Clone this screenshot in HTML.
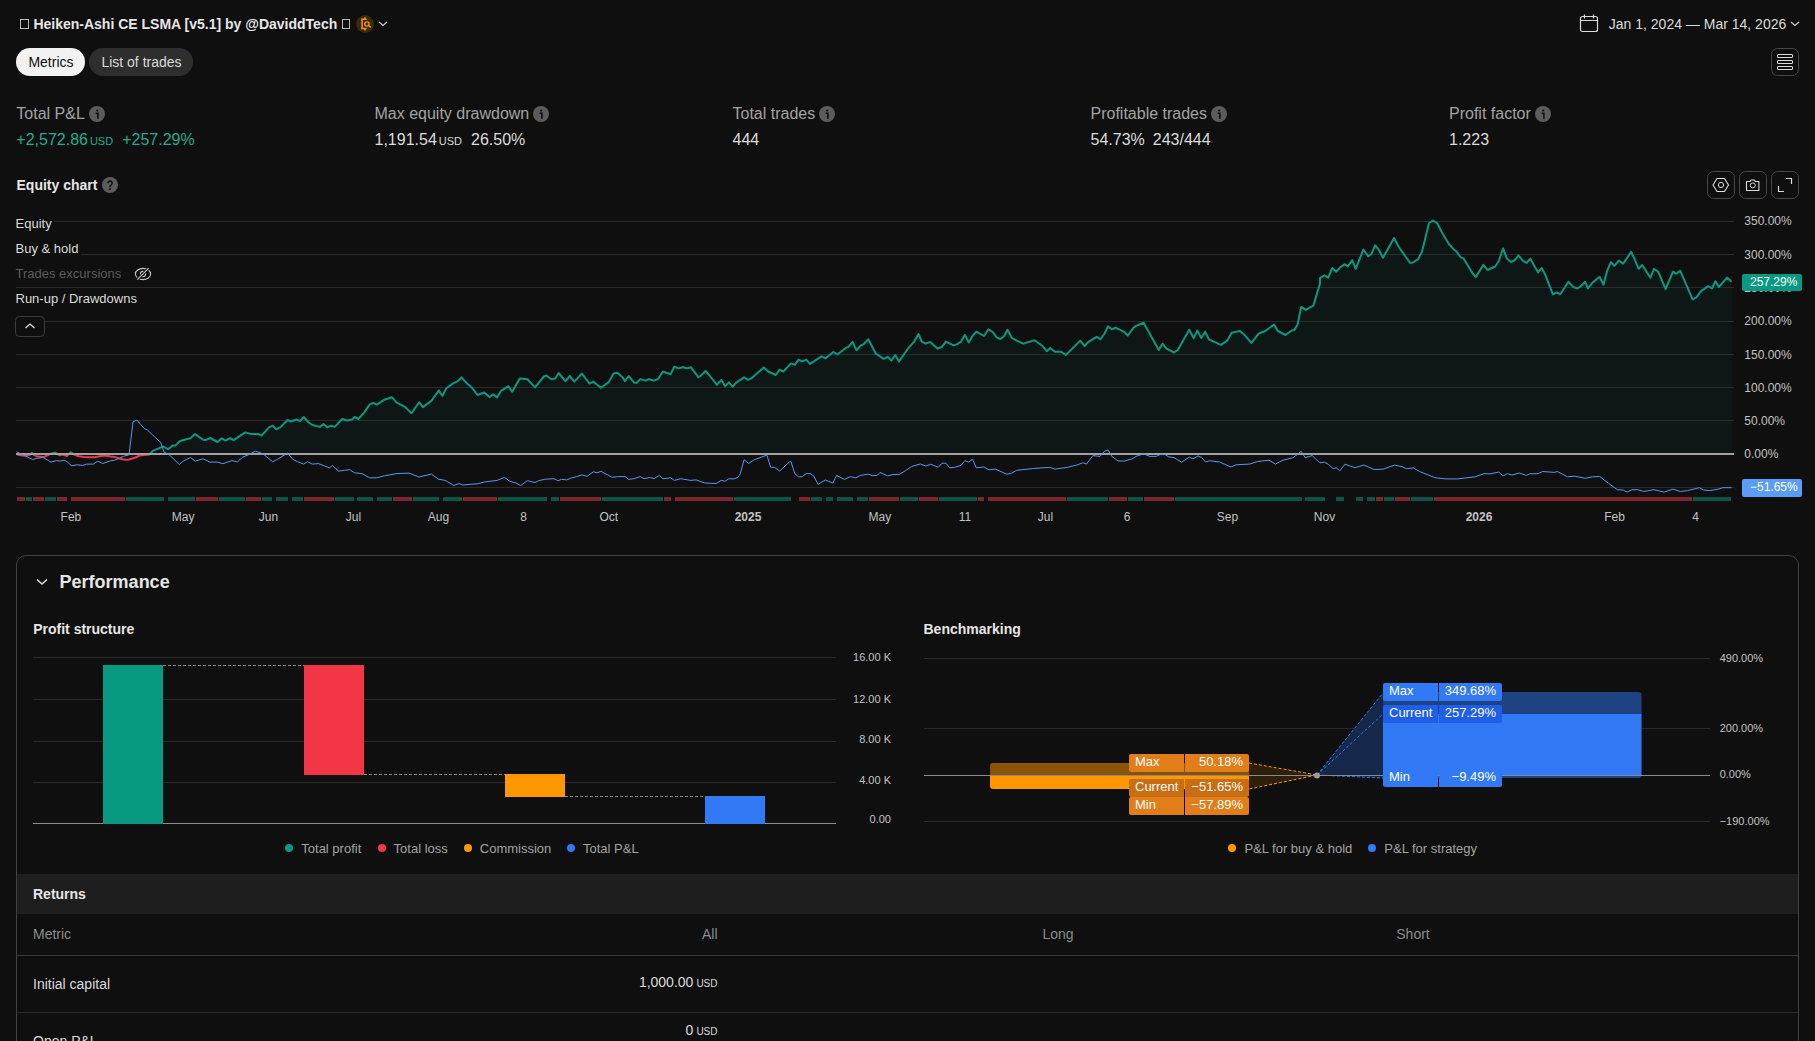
<!DOCTYPE html>
<html><head><meta charset="utf-8"><style>
html,body{margin:0;padding:0;background:#0f0f0f;}
body{width:1815px;height:1041px;overflow:hidden;position:relative;font-family:"Liberation Sans", sans-serif;}
.t{position:absolute;white-space:nowrap;}
.r{position:absolute;}
</style></head><body>
<div class="r" style="left:20px;top:19px;width:9px;height:10px;background:transparent;border:1px solid #b8b8b8;box-sizing:border-box;"></div>
<div class="t" style="left:33.4px;top:17.35px;font-size:14px;line-height:14px;color:#e6e6e6;font-weight:700;">Heiken-Ashi CE LSMA [v5.1] by @DaviddTech</div>
<div class="r" style="left:342px;top:19px;width:8px;height:10px;background:transparent;border:1px solid #b8b8b8;box-sizing:border-box;"></div>
<svg class="r" style="left:356px;top:15px" width="18" height="18" viewBox="0 0 18 18">
<circle cx="9" cy="9" r="9" fill="#3a2908"/>
<path d="M9 2.2 v2 M9 13.6 v2 M5.2 4.2 h5.5 M5.2 13.6 h5.5 M6 4.2 v9.4" stroke="#f7930e" stroke-width="1.5" fill="none"/>
<circle cx="10.9" cy="9" r="2.1" stroke="#f7930e" stroke-width="1.4" fill="none"/>
<path d="M12.5 10.5 l2.2 1.8" stroke="#f7930e" stroke-width="1.5"/>
</svg>
<svg class="r" style="left:378px;top:20px" width="10" height="8" viewBox="0 0 10 8"><path d="M1 2 l4 3.5 l4 -3.5" stroke="#c8c8c8" stroke-width="1.3" fill="none"/></svg>
<svg class="r" style="left:1579px;top:13px" width="20" height="20" viewBox="0 0 20 20">
<rect x="1.5" y="3.5" width="17" height="15" rx="2" stroke="#dbdbdb" stroke-width="1.2" fill="none"/>
<path d="M1.5 7.5 h17 M5.5 1.5 v4 M14.5 1.5 v4" stroke="#dbdbdb" stroke-width="1.2"/>
</svg>
<div class="t" style="left:1608.8px;top:17.45px;font-size:14px;line-height:14px;color:#dbdbdb;">Jan 1, 2024 — Mar 14, 2026</div>
<svg class="r" style="left:1790px;top:20px" width="10" height="8" viewBox="0 0 10 8"><path d="M1 2 l4 3.5 l4 -3.5" stroke="#c8c8c8" stroke-width="1.3" fill="none"/></svg>
<div class="r" style="left:16px;top:48px;width:69px;height:28px;background:#f2f2f2;border-radius:14px;"></div>
<div class="t" style="left:28.4px;top:54.85px;font-size:14px;line-height:14px;color:#0f0f0f;">Metrics</div>
<div class="r" style="left:89px;top:48px;width:104px;height:28px;background:#2e2e2e;border-radius:14px;"></div>
<div class="t" style="left:101.4px;top:54.85px;font-size:14px;line-height:14px;color:#dbdbdb;">List of trades</div>
<svg class="r" style="left:1771px;top:48px" width="28" height="28" viewBox="0 0 28 28">
<rect x="0.5" y="0.5" width="27" height="27" rx="6" stroke="#474747" fill="none"/>
<rect x="6.5" y="6.5" width="15" height="3" rx="0.5" stroke="#dbdbdb" fill="none"/>
<rect x="6.5" y="12.5" width="15" height="3" rx="0.5" stroke="#dbdbdb" fill="none"/>
<rect x="6.5" y="18.5" width="15" height="3" rx="0.5" stroke="#dbdbdb" fill="none"/>
</svg>
<div class="t" style="left:16.3px;top:105.96px;font-size:16px;line-height:16px;color:#a3a3a3;">Total P&amp;L<svg style="margin-left:4px;vertical-align:-3px" width="16" height="16" viewBox="0 0 16 16"><circle cx="8" cy="8" r="8" fill="#5c5c5c"/><circle cx="8.2" cy="4.5" r="1.1" fill="#0f0f0f"/><path d="M6.6 7.2 h2.3 v5.6" stroke="#0f0f0f" stroke-width="1.6" fill="none"/></svg></div>
<div class="t" style="left:374.5px;top:105.96px;font-size:16px;line-height:16px;color:#a3a3a3;">Max equity drawdown<svg style="margin-left:4px;vertical-align:-3px" width="16" height="16" viewBox="0 0 16 16"><circle cx="8" cy="8" r="8" fill="#5c5c5c"/><circle cx="8.2" cy="4.5" r="1.1" fill="#0f0f0f"/><path d="M6.6 7.2 h2.3 v5.6" stroke="#0f0f0f" stroke-width="1.6" fill="none"/></svg></div>
<div class="t" style="left:732.5px;top:105.96px;font-size:16px;line-height:16px;color:#a3a3a3;">Total trades<svg style="margin-left:4px;vertical-align:-3px" width="16" height="16" viewBox="0 0 16 16"><circle cx="8" cy="8" r="8" fill="#5c5c5c"/><circle cx="8.2" cy="4.5" r="1.1" fill="#0f0f0f"/><path d="M6.6 7.2 h2.3 v5.6" stroke="#0f0f0f" stroke-width="1.6" fill="none"/></svg></div>
<div class="t" style="left:1090.5px;top:105.96px;font-size:16px;line-height:16px;color:#a3a3a3;">Profitable trades<svg style="margin-left:4px;vertical-align:-3px" width="16" height="16" viewBox="0 0 16 16"><circle cx="8" cy="8" r="8" fill="#5c5c5c"/><circle cx="8.2" cy="4.5" r="1.1" fill="#0f0f0f"/><path d="M6.6 7.2 h2.3 v5.6" stroke="#0f0f0f" stroke-width="1.6" fill="none"/></svg></div>
<div class="t" style="left:1449px;top:105.96px;font-size:16px;line-height:16px;color:#a3a3a3;">Profit factor<svg style="margin-left:4px;vertical-align:-3px" width="16" height="16" viewBox="0 0 16 16"><circle cx="8" cy="8" r="8" fill="#5c5c5c"/><circle cx="8.2" cy="4.5" r="1.1" fill="#0f0f0f"/><path d="M6.6 7.2 h2.3 v5.6" stroke="#0f0f0f" stroke-width="1.6" fill="none"/></svg></div>
<div class="t" style="left:16.3px;top:132.06px;font-size:16px;line-height:16px;color:#22ab94">+2,572.86<span style="font-size:11px;margin-left:2px">USD</span><span style="margin-left:9px">+257.29%</span></div>
<div class="t" style="left:374.5px;top:132.06px;font-size:16px;line-height:16px;color:#dbdbdb">1,191.54<span style="font-size:11px;margin-left:2px">USD</span><span style="margin-left:9px">26.50%</span></div>
<div class="t" style="left:732.5px;top:132.06px;font-size:16px;line-height:16px;color:#dbdbdb">444</div>
<div class="t" style="left:1090.5px;top:132.06px;font-size:16px;line-height:16px;color:#dbdbdb">54.73%<span style="margin-left:8px">243/444</span></div>
<div class="t" style="left:1449px;top:132.06px;font-size:16px;line-height:16px;color:#dbdbdb">1.223</div>
<div class="t" style="left:16.5px;top:178.15px;font-size:14px;line-height:14px;color:#e6e6e6;font-weight:700;">Equity chart</div>
<svg class="r" style="left:102px;top:177px" width="16" height="16" viewBox="0 0 16 16"><circle cx="8" cy="8" r="8" fill="#5c5c5c"/><path d="M5.8 6.2 a2.2 2.2 0 1 1 3.2 2 c-0.7 0.4 -1 0.7 -1 1.5 v0.5" stroke="#0f0f0f" stroke-width="1.5" fill="none"/><circle cx="8" cy="12" r="1" fill="#0f0f0f"/></svg>
<svg class="r" style="left:1707px;top:171px" width="28" height="28" viewBox="0 0 28 28"><rect x="0.5" y="0.5" width="27" height="27" rx="6" stroke="#474747" fill="none"/><path d="M10 7.5 L17.5 7.5 L21.5 14 L17.5 20.5 L10 20.5 L6 14 Z" stroke="#dbdbdb" stroke-width="1.1" fill="none" stroke-linejoin="round"/><circle cx="14" cy="14" r="2.6" stroke="#dbdbdb" stroke-width="1" fill="none"/></svg>
<svg class="r" style="left:1739px;top:171px" width="28" height="28" viewBox="0 0 28 28"><rect x="0.5" y="0.5" width="27" height="27" rx="6" stroke="#474747" fill="none"/><path d="M7.5 10.5 h3.6 l0.8 -1.5 h3.6 l0.8 1.5 h3.6 v9 h-12.4 z" stroke="#dbdbdb" stroke-width="1.1" fill="none" stroke-linejoin="round"/><circle cx="13.8" cy="14.4" r="2.5" stroke="#dbdbdb" stroke-width="1" fill="none"/></svg>
<svg class="r" style="left:1771px;top:171px" width="28" height="28" viewBox="0 0 28 28"><rect x="0.5" y="0.5" width="27" height="27" rx="6" stroke="#474747" fill="none"/><path d="M7.5 15 v5.5 h5.5 M15 7.5 h5.5 v5.5" stroke="#dbdbdb" stroke-width="1.2" fill="none"/></svg>
<svg class="r" style="left:0;top:0" width="1815" height="560"><rect x="16" y="221" width="1718" height="1" fill="#2a2a2a"/><rect x="16" y="254" width="1718" height="1" fill="#2a2a2a"/><rect x="16" y="287" width="1718" height="1" fill="#2a2a2a"/><rect x="16" y="321" width="1718" height="1" fill="#2a2a2a"/><rect x="16" y="354" width="1718" height="1" fill="#2a2a2a"/><rect x="16" y="387" width="1718" height="1" fill="#2a2a2a"/><rect x="16" y="420" width="1718" height="1" fill="#2a2a2a"/><rect x="16" y="487" width="1718" height="1" fill="#2a2a2a"/><defs><clipPath id="above"><rect x="0" y="0" width="1815" height="454"/></clipPath><clipPath id="below"><rect x="0" y="454" width="1815" height="100"/></clipPath></defs><path d="M16.6,454 L16.6,454.2 L20.6,455.3 L25.9,455.8 L29.8,454.9 L31.8,452.9 L33.8,454.9 L36.4,456.2 L43.7,457.1 L47.0,455.5 L51.0,453.6 L55.0,452.6 L57.6,454.2 L59.6,455.3 L62.9,454.5 L66.9,456.2 L68.2,454.5 L70.8,452.2 L73.5,454.2 L78.8,456.2 L84.0,457.1 L89.3,457.3 L94.6,457.3 L99.9,456.2 L105.2,455.5 L110.5,456.6 L114.5,456.9 L119.8,458.6 L125.0,459.8 L129.0,459.5 L135.6,457.5 L139.6,455.5 L143.6,454.9 L149.5,454.5 L152.8,450.9 L156.8,449.2 L163.4,446.5 L168.0,449.2 L172.6,445.6 L175.3,445.6 L179.9,441.0 L190.5,438.3 L195.1,434.1 L203.1,439.7 L205.7,440.1 L210.3,438.0 L217.6,442.0 L221.6,438.3 L225.5,440.7 L230.2,438.1 L233.5,440.1 L245.4,432.4 L250.4,433.9 L257.9,433.9 L261.6,435.6 L269.0,427.4 L272.7,425.7 L276.5,429.4 L280.2,427.4 L287.6,420.0 L291.3,421.5 L296.3,419.5 L300.0,421.0 L303.7,417.0 L308.7,422.5 L312.4,425.0 L319.9,426.9 L323.6,424.0 L327.3,427.4 L331.0,425.7 L334.7,426.9 L342.2,419.0 L347.1,420.5 L352.1,419.5 L354.6,417.0 L358.3,419.0 L364.5,412.1 L369.5,404.6 L373.2,402.9 L376.9,404.6 L384.3,399.7 L391.8,397.2 L396.7,402.6 L401.7,405.1 L405.4,407.1 L411.6,413.3 L419.0,402.2 L422.8,407.1 L431.4,400.9 L438.9,390.3 L440.0,392.5 L442.5,395.8 L446.3,388.2 L452.7,383.6 L457.7,381.1 L461.5,377.3 L466.6,383.1 L471.7,387.4 L477.5,395.0 L484.3,392.5 L489.4,397.1 L493.2,394.3 L497.0,397.6 L500.8,391.2 L508.4,386.2 L512.2,391.7 L519.8,378.6 L527.4,379.3 L535.0,387.4 L543.9,376.5 L546.4,375.5 L551.5,379.3 L555.3,378.6 L558.6,373.0 L565.4,381.1 L569.8,376.0 L574.3,381.6 L581.9,373.5 L589.5,383.6 L593.3,381.6 L600.9,387.7 L608.5,382.4 L613.6,373.5 L617.4,372.7 L622.5,377.3 L625.0,381.1 L628.8,376.0 L633.9,382.4 L636.4,383.1 L640.2,379.1 L645.3,380.6 L649.1,379.3 L654.1,380.6 L657.9,379.1 L663.0,371.5 L670.6,374.3 L674.4,366.6 L678.2,368.4 L683.3,367.2 L687.1,368.4 L690.9,367.2 L698.5,377.3 L701.0,375.5 L705.6,371.0 L709.9,376.0 L717.0,384.9 L721.3,379.8 L725.1,386.2 L728.9,382.4 L732.7,386.7 L736.5,382.4 L744.1,377.3 L747.9,379.8 L751.7,378.1 L763.9,367.4 L768.2,371.5 L775.8,375.0 L779.6,369.7 L783.4,371.5 L791.0,363.4 L794.8,364.9 L798.6,359.6 L802.4,361.3 L806.2,359.6 L810.0,363.9 L821.4,356.3 L825.7,358.3 L833.3,352.0 L837.4,354.5 L845.5,348.2 L848.5,346.9 L852.6,341.8 L856.4,350.2 L860.7,345.6 L864.0,343.8 L868.3,339.3 L875.9,353.7 L880.0,356.3 L883.8,358.8 L887.6,356.8 L891.4,360.6 L895.2,355.0 L899.0,361.4 L907.9,348.7 L914.2,341.6 L918.5,334.0 L921.8,341.6 L925.6,343.6 L930.2,341.9 L937.8,348.7 L942.1,346.7 L945.9,341.6 L953.5,345.4 L957.3,344.1 L961.1,341.6 L964.9,334.8 L968.7,342.4 L972.5,336.0 L976.3,331.7 L983.9,336.0 L988.5,329.2 L992.8,332.2 L996.6,337.3 L1000.4,339.1 L1004.2,336.0 L1007.5,329.7 L1011.8,337.8 L1016.8,340.6 L1023.2,343.6 L1034.6,340.3 L1042.2,345.7 L1046.8,351.2 L1050.3,347.9 L1054.9,351.7 L1061.2,351.7 L1065.8,355.0 L1080.2,340.6 L1084.8,346.2 L1087.8,342.4 L1096.7,336.8 L1100.5,339.1 L1104.3,334.0 L1108.1,326.4 L1111.9,329.2 L1115.7,327.7 L1124.6,332.2 L1127.8,335.5 L1133.4,327.9 L1136.0,325.9 L1143.6,322.8 L1158.8,350.0 L1162.6,343.6 L1166.4,348.7 L1174.0,352.5 L1177.8,350.0 L1189.2,329.7 L1193.7,338.1 L1197.3,330.5 L1201.3,338.1 L1205.1,331.7 L1208.9,339.3 L1220.9,344.9 L1227.2,340.6 L1231.7,332.7 L1239.9,331.0 L1244.9,335.3 L1251.3,342.9 L1258.9,333.5 L1265.2,331.0 L1274.1,324.6 L1277.9,331.0 L1285.5,335.0 L1291.8,330.5 L1294.3,329.9 L1297.6,324.6 L1301.2,306.9 L1305.7,309.9 L1313.4,305.6 L1320.0,283.5 L1320.0,278.2 L1324.4,275.3 L1328.2,277.6 L1332.3,268.0 L1336.1,271.8 L1340.5,267.1 L1344.9,264.2 L1347.8,266.5 L1352.2,260.1 L1355.7,268.9 L1363.4,249.5 L1368.3,256.3 L1371.3,254.2 L1375.1,245.4 L1378.6,249.5 L1383.0,257.7 L1394.1,238.1 L1399.1,247.5 L1410.2,263.0 L1413.7,262.1 L1418.1,259.2 L1421.9,251.9 L1429.0,223.2 L1432.8,220.5 L1437.2,223.2 L1443.0,234.3 L1448.9,244.0 L1453.3,248.9 L1456.2,251.3 L1460.6,257.1 L1463.5,258.3 L1472.3,273.0 L1475.8,277.1 L1483.4,264.8 L1487.5,270.0 L1495.2,266.5 L1498.7,261.2 L1503.1,248.4 L1506.9,258.6 L1511.0,262.1 L1514.8,260.1 L1518.6,255.4 L1522.7,260.7 L1526.5,263.0 L1530.3,258.6 L1533.8,265.0 L1538.2,272.4 L1541.7,268.0 L1545.5,275.3 L1552.9,294.3 L1556.7,292.3 L1560.2,294.3 L1568.4,281.7 L1573.4,287.0 L1577.2,288.5 L1580.7,286.4 L1585.1,281.7 L1588.0,288.5 L1592.4,282.6 L1599.7,276.8 L1603.5,284.7 L1607.1,270.9 L1610.9,262.1 L1614.4,265.9 L1618.8,260.7 L1623.2,263.6 L1631.1,251.9 L1634.0,257.7 L1638.7,268.9 L1642.2,265.0 L1650.4,277.6 L1653.9,268.9 L1658.3,271.8 L1665.6,289.1 L1673.0,271.5 L1675.9,273.8 L1680.3,270.9 L1692.6,299.3 L1696.4,297.3 L1700.8,291.4 L1708.1,286.1 L1711.9,288.5 L1715.4,281.2 L1718.9,287.0 L1727.1,277.6 L1731.5,281.7 L1731.5,454 Z" fill="rgba(8,153,129,0.06)" clip-path="url(#above)"/><polyline points="16.6,454.2 20.6,455.3 25.9,455.8 29.8,454.9 31.8,452.9 33.8,454.9 36.4,456.2 43.7,457.1 47.0,455.5 51.0,453.6 55.0,452.6 57.6,454.2 59.6,455.3 62.9,454.5 66.9,456.2 68.2,454.5 70.8,452.2 73.5,454.2 78.8,456.2 84.0,457.1 89.3,457.3 94.6,457.3 99.9,456.2 105.2,455.5 110.5,456.6 114.5,456.9 119.8,458.6 125.0,459.8 129.0,459.5 135.6,457.5 139.6,455.5 143.6,454.9 149.5,454.5 152.8,450.9 156.8,449.2 163.4,446.5 168.0,449.2 172.6,445.6 175.3,445.6 179.9,441.0 190.5,438.3 195.1,434.1 203.1,439.7 205.7,440.1 210.3,438.0 217.6,442.0 221.6,438.3 225.5,440.7 230.2,438.1 233.5,440.1 245.4,432.4 250.4,433.9 257.9,433.9 261.6,435.6 269.0,427.4 272.7,425.7 276.5,429.4 280.2,427.4 287.6,420.0 291.3,421.5 296.3,419.5 300.0,421.0 303.7,417.0 308.7,422.5 312.4,425.0 319.9,426.9 323.6,424.0 327.3,427.4 331.0,425.7 334.7,426.9 342.2,419.0 347.1,420.5 352.1,419.5 354.6,417.0 358.3,419.0 364.5,412.1 369.5,404.6 373.2,402.9 376.9,404.6 384.3,399.7 391.8,397.2 396.7,402.6 401.7,405.1 405.4,407.1 411.6,413.3 419.0,402.2 422.8,407.1 431.4,400.9 438.9,390.3 440.0,392.5 442.5,395.8 446.3,388.2 452.7,383.6 457.7,381.1 461.5,377.3 466.6,383.1 471.7,387.4 477.5,395.0 484.3,392.5 489.4,397.1 493.2,394.3 497.0,397.6 500.8,391.2 508.4,386.2 512.2,391.7 519.8,378.6 527.4,379.3 535.0,387.4 543.9,376.5 546.4,375.5 551.5,379.3 555.3,378.6 558.6,373.0 565.4,381.1 569.8,376.0 574.3,381.6 581.9,373.5 589.5,383.6 593.3,381.6 600.9,387.7 608.5,382.4 613.6,373.5 617.4,372.7 622.5,377.3 625.0,381.1 628.8,376.0 633.9,382.4 636.4,383.1 640.2,379.1 645.3,380.6 649.1,379.3 654.1,380.6 657.9,379.1 663.0,371.5 670.6,374.3 674.4,366.6 678.2,368.4 683.3,367.2 687.1,368.4 690.9,367.2 698.5,377.3 701.0,375.5 705.6,371.0 709.9,376.0 717.0,384.9 721.3,379.8 725.1,386.2 728.9,382.4 732.7,386.7 736.5,382.4 744.1,377.3 747.9,379.8 751.7,378.1 763.9,367.4 768.2,371.5 775.8,375.0 779.6,369.7 783.4,371.5 791.0,363.4 794.8,364.9 798.6,359.6 802.4,361.3 806.2,359.6 810.0,363.9 821.4,356.3 825.7,358.3 833.3,352.0 837.4,354.5 845.5,348.2 848.5,346.9 852.6,341.8 856.4,350.2 860.7,345.6 864.0,343.8 868.3,339.3 875.9,353.7 880.0,356.3 883.8,358.8 887.6,356.8 891.4,360.6 895.2,355.0 899.0,361.4 907.9,348.7 914.2,341.6 918.5,334.0 921.8,341.6 925.6,343.6 930.2,341.9 937.8,348.7 942.1,346.7 945.9,341.6 953.5,345.4 957.3,344.1 961.1,341.6 964.9,334.8 968.7,342.4 972.5,336.0 976.3,331.7 983.9,336.0 988.5,329.2 992.8,332.2 996.6,337.3 1000.4,339.1 1004.2,336.0 1007.5,329.7 1011.8,337.8 1016.8,340.6 1023.2,343.6 1034.6,340.3 1042.2,345.7 1046.8,351.2 1050.3,347.9 1054.9,351.7 1061.2,351.7 1065.8,355.0 1080.2,340.6 1084.8,346.2 1087.8,342.4 1096.7,336.8 1100.5,339.1 1104.3,334.0 1108.1,326.4 1111.9,329.2 1115.7,327.7 1124.6,332.2 1127.8,335.5 1133.4,327.9 1136.0,325.9 1143.6,322.8 1158.8,350.0 1162.6,343.6 1166.4,348.7 1174.0,352.5 1177.8,350.0 1189.2,329.7 1193.7,338.1 1197.3,330.5 1201.3,338.1 1205.1,331.7 1208.9,339.3 1220.9,344.9 1227.2,340.6 1231.7,332.7 1239.9,331.0 1244.9,335.3 1251.3,342.9 1258.9,333.5 1265.2,331.0 1274.1,324.6 1277.9,331.0 1285.5,335.0 1291.8,330.5 1294.3,329.9 1297.6,324.6 1301.2,306.9 1305.7,309.9 1313.4,305.6 1320.0,283.5 1320.0,278.2 1324.4,275.3 1328.2,277.6 1332.3,268.0 1336.1,271.8 1340.5,267.1 1344.9,264.2 1347.8,266.5 1352.2,260.1 1355.7,268.9 1363.4,249.5 1368.3,256.3 1371.3,254.2 1375.1,245.4 1378.6,249.5 1383.0,257.7 1394.1,238.1 1399.1,247.5 1410.2,263.0 1413.7,262.1 1418.1,259.2 1421.9,251.9 1429.0,223.2 1432.8,220.5 1437.2,223.2 1443.0,234.3 1448.9,244.0 1453.3,248.9 1456.2,251.3 1460.6,257.1 1463.5,258.3 1472.3,273.0 1475.8,277.1 1483.4,264.8 1487.5,270.0 1495.2,266.5 1498.7,261.2 1503.1,248.4 1506.9,258.6 1511.0,262.1 1514.8,260.1 1518.6,255.4 1522.7,260.7 1526.5,263.0 1530.3,258.6 1533.8,265.0 1538.2,272.4 1541.7,268.0 1545.5,275.3 1552.9,294.3 1556.7,292.3 1560.2,294.3 1568.4,281.7 1573.4,287.0 1577.2,288.5 1580.7,286.4 1585.1,281.7 1588.0,288.5 1592.4,282.6 1599.7,276.8 1603.5,284.7 1607.1,270.9 1610.9,262.1 1614.4,265.9 1618.8,260.7 1623.2,263.6 1631.1,251.9 1634.0,257.7 1638.7,268.9 1642.2,265.0 1650.4,277.6 1653.9,268.9 1658.3,271.8 1665.6,289.1 1673.0,271.5 1675.9,273.8 1680.3,270.9 1692.6,299.3 1696.4,297.3 1700.8,291.4 1708.1,286.1 1711.9,288.5 1715.4,281.2 1718.9,287.0 1727.1,277.6 1731.5,281.7" fill="none" stroke="#f23645" stroke-width="2" stroke-linejoin="round" clip-path="url(#below)"/><polyline points="16.6,454.2 20.6,455.3 25.9,455.8 29.8,454.9 31.8,452.9 33.8,454.9 36.4,456.2 43.7,457.1 47.0,455.5 51.0,453.6 55.0,452.6 57.6,454.2 59.6,455.3 62.9,454.5 66.9,456.2 68.2,454.5 70.8,452.2 73.5,454.2 78.8,456.2 84.0,457.1 89.3,457.3 94.6,457.3 99.9,456.2 105.2,455.5 110.5,456.6 114.5,456.9 119.8,458.6 125.0,459.8 129.0,459.5 135.6,457.5 139.6,455.5 143.6,454.9 149.5,454.5 152.8,450.9 156.8,449.2 163.4,446.5 168.0,449.2 172.6,445.6 175.3,445.6 179.9,441.0 190.5,438.3 195.1,434.1 203.1,439.7 205.7,440.1 210.3,438.0 217.6,442.0 221.6,438.3 225.5,440.7 230.2,438.1 233.5,440.1 245.4,432.4 250.4,433.9 257.9,433.9 261.6,435.6 269.0,427.4 272.7,425.7 276.5,429.4 280.2,427.4 287.6,420.0 291.3,421.5 296.3,419.5 300.0,421.0 303.7,417.0 308.7,422.5 312.4,425.0 319.9,426.9 323.6,424.0 327.3,427.4 331.0,425.7 334.7,426.9 342.2,419.0 347.1,420.5 352.1,419.5 354.6,417.0 358.3,419.0 364.5,412.1 369.5,404.6 373.2,402.9 376.9,404.6 384.3,399.7 391.8,397.2 396.7,402.6 401.7,405.1 405.4,407.1 411.6,413.3 419.0,402.2 422.8,407.1 431.4,400.9 438.9,390.3 440.0,392.5 442.5,395.8 446.3,388.2 452.7,383.6 457.7,381.1 461.5,377.3 466.6,383.1 471.7,387.4 477.5,395.0 484.3,392.5 489.4,397.1 493.2,394.3 497.0,397.6 500.8,391.2 508.4,386.2 512.2,391.7 519.8,378.6 527.4,379.3 535.0,387.4 543.9,376.5 546.4,375.5 551.5,379.3 555.3,378.6 558.6,373.0 565.4,381.1 569.8,376.0 574.3,381.6 581.9,373.5 589.5,383.6 593.3,381.6 600.9,387.7 608.5,382.4 613.6,373.5 617.4,372.7 622.5,377.3 625.0,381.1 628.8,376.0 633.9,382.4 636.4,383.1 640.2,379.1 645.3,380.6 649.1,379.3 654.1,380.6 657.9,379.1 663.0,371.5 670.6,374.3 674.4,366.6 678.2,368.4 683.3,367.2 687.1,368.4 690.9,367.2 698.5,377.3 701.0,375.5 705.6,371.0 709.9,376.0 717.0,384.9 721.3,379.8 725.1,386.2 728.9,382.4 732.7,386.7 736.5,382.4 744.1,377.3 747.9,379.8 751.7,378.1 763.9,367.4 768.2,371.5 775.8,375.0 779.6,369.7 783.4,371.5 791.0,363.4 794.8,364.9 798.6,359.6 802.4,361.3 806.2,359.6 810.0,363.9 821.4,356.3 825.7,358.3 833.3,352.0 837.4,354.5 845.5,348.2 848.5,346.9 852.6,341.8 856.4,350.2 860.7,345.6 864.0,343.8 868.3,339.3 875.9,353.7 880.0,356.3 883.8,358.8 887.6,356.8 891.4,360.6 895.2,355.0 899.0,361.4 907.9,348.7 914.2,341.6 918.5,334.0 921.8,341.6 925.6,343.6 930.2,341.9 937.8,348.7 942.1,346.7 945.9,341.6 953.5,345.4 957.3,344.1 961.1,341.6 964.9,334.8 968.7,342.4 972.5,336.0 976.3,331.7 983.9,336.0 988.5,329.2 992.8,332.2 996.6,337.3 1000.4,339.1 1004.2,336.0 1007.5,329.7 1011.8,337.8 1016.8,340.6 1023.2,343.6 1034.6,340.3 1042.2,345.7 1046.8,351.2 1050.3,347.9 1054.9,351.7 1061.2,351.7 1065.8,355.0 1080.2,340.6 1084.8,346.2 1087.8,342.4 1096.7,336.8 1100.5,339.1 1104.3,334.0 1108.1,326.4 1111.9,329.2 1115.7,327.7 1124.6,332.2 1127.8,335.5 1133.4,327.9 1136.0,325.9 1143.6,322.8 1158.8,350.0 1162.6,343.6 1166.4,348.7 1174.0,352.5 1177.8,350.0 1189.2,329.7 1193.7,338.1 1197.3,330.5 1201.3,338.1 1205.1,331.7 1208.9,339.3 1220.9,344.9 1227.2,340.6 1231.7,332.7 1239.9,331.0 1244.9,335.3 1251.3,342.9 1258.9,333.5 1265.2,331.0 1274.1,324.6 1277.9,331.0 1285.5,335.0 1291.8,330.5 1294.3,329.9 1297.6,324.6 1301.2,306.9 1305.7,309.9 1313.4,305.6 1320.0,283.5 1320.0,278.2 1324.4,275.3 1328.2,277.6 1332.3,268.0 1336.1,271.8 1340.5,267.1 1344.9,264.2 1347.8,266.5 1352.2,260.1 1355.7,268.9 1363.4,249.5 1368.3,256.3 1371.3,254.2 1375.1,245.4 1378.6,249.5 1383.0,257.7 1394.1,238.1 1399.1,247.5 1410.2,263.0 1413.7,262.1 1418.1,259.2 1421.9,251.9 1429.0,223.2 1432.8,220.5 1437.2,223.2 1443.0,234.3 1448.9,244.0 1453.3,248.9 1456.2,251.3 1460.6,257.1 1463.5,258.3 1472.3,273.0 1475.8,277.1 1483.4,264.8 1487.5,270.0 1495.2,266.5 1498.7,261.2 1503.1,248.4 1506.9,258.6 1511.0,262.1 1514.8,260.1 1518.6,255.4 1522.7,260.7 1526.5,263.0 1530.3,258.6 1533.8,265.0 1538.2,272.4 1541.7,268.0 1545.5,275.3 1552.9,294.3 1556.7,292.3 1560.2,294.3 1568.4,281.7 1573.4,287.0 1577.2,288.5 1580.7,286.4 1585.1,281.7 1588.0,288.5 1592.4,282.6 1599.7,276.8 1603.5,284.7 1607.1,270.9 1610.9,262.1 1614.4,265.9 1618.8,260.7 1623.2,263.6 1631.1,251.9 1634.0,257.7 1638.7,268.9 1642.2,265.0 1650.4,277.6 1653.9,268.9 1658.3,271.8 1665.6,289.1 1673.0,271.5 1675.9,273.8 1680.3,270.9 1692.6,299.3 1696.4,297.3 1700.8,291.4 1708.1,286.1 1711.9,288.5 1715.4,281.2 1718.9,287.0 1727.1,277.6 1731.5,281.7" fill="none" stroke="#089981" stroke-width="2" stroke-linejoin="round" clip-path="url(#above)"/><rect x="16" y="453" width="1718" height="2" fill="#a0a0a0"/><polyline points="16.6,451.6 17.9,452.5 25.9,456.2 32.5,459.5 37.8,458.2 43.1,457.5 51.0,462.1 56.3,460.6 60.2,461.1 64.2,460.2 66.9,461.5 71.5,465.7 77.4,464.8 82.7,465.5 86.7,464.1 93.3,464.1 97.9,461.1 102.6,463.5 110.5,460.8 114.5,460.2 119.8,458.2 123.7,456.2 129.0,454.9 133.0,421.8 136.9,420.1 144.2,428.4 147.5,430.1 154.1,436.4 160.7,442.3 164.0,452.2 168.7,454.2 179.3,464.5 183.2,461.1 190.5,457.5 195.1,461.1 203.1,458.8 209.7,462.1 217.6,462.1 222.9,463.7 232.1,460.6 237.4,461.9 242.7,457.1 248.0,455.0 255.4,451.2 262.8,453.7 272.7,461.7 277.7,459.2 287.6,453.0 292.6,459.2 297.5,461.7 303.7,464.1 307.5,461.7 312.4,464.1 318.6,463.6 324.8,466.1 329.8,467.9 332.3,465.4 338.5,471.1 344.7,470.3 349.6,469.6 354.6,472.8 362.0,473.6 369.5,477.8 376.9,477.8 384.3,475.8 396.7,473.6 409.1,473.1 419.0,477.0 431.4,474.1 438.9,479.5 440.0,479.4 445.1,480.4 453.9,485.5 459.0,483.5 462.8,485.0 478.0,483.7 484.3,482.0 497.0,480.4 504.6,477.4 509.7,481.2 516.0,483.0 520.6,485.5 527.4,480.7 535.0,482.5 538.8,480.7 545.2,479.2 554.0,478.7 557.8,480.7 561.6,479.4 566.7,479.9 571.8,477.9 576.8,476.6 581.9,474.9 587.0,476.4 593.3,471.8 597.1,472.8 600.9,471.3 612.3,477.4 617.4,476.6 625.0,476.6 628.8,479.4 633.9,478.7 640.2,476.6 644.0,478.7 650.3,477.4 654.1,478.7 659.2,475.4 663.0,478.7 670.6,477.9 674.4,480.4 680.8,478.7 690.9,480.4 696.0,479.9 704.8,483.0 716.2,483.5 721.3,480.4 725.1,481.2 728.9,478.7 734.0,478.9 737.8,477.4 740.3,473.6 744.1,459.7 748.7,463.5 754.2,459.7 766.9,455.1 770.7,467.3 774.5,467.3 779.6,471.1 789.7,461.7 791.0,461.7 794.8,473.6 798.6,476.9 802.4,476.6 806.2,473.6 810.0,473.6 813.8,476.1 818.1,484.5 825.2,479.9 832.8,483.0 836.6,475.4 844.2,479.4 850.5,476.6 855.6,477.9 860.7,475.4 868.3,474.1 872.1,475.6 877.2,475.4 880.0,472.4 887.6,475.9 893.9,474.4 899.0,474.6 905.3,470.8 911.7,466.5 920.5,464.0 925.6,466.0 930.7,464.3 938.3,467.3 942.1,463.2 945.9,463.2 949.7,467.8 954.8,467.3 961.1,465.3 964.9,460.7 968.7,462.2 972.5,459.2 976.3,467.8 983.9,467.0 989.0,469.8 995.3,469.1 1006.7,474.1 1011.3,473.4 1016.8,470.3 1032.1,468.6 1049.8,467.3 1054.9,469.1 1067.5,467.3 1077.7,464.8 1082.7,462.7 1086.5,464.0 1092.9,455.6 1100.0,456.4 1104.3,451.3 1108.1,450.1 1111.9,456.4 1118.2,461.0 1124.6,461.0 1132.2,458.9 1136.0,456.4 1143.6,453.9 1149.9,456.4 1156.2,456.4 1160.0,454.6 1165.1,454.6 1168.9,456.9 1174.0,457.7 1181.6,462.2 1189.2,457.2 1193.0,458.9 1198.0,455.9 1201.8,457.7 1205.6,462.0 1209.4,460.7 1219.6,462.0 1231.0,467.0 1236.1,464.8 1250.0,464.0 1257.6,461.5 1269.0,460.2 1275.3,464.0 1282.9,460.2 1293.1,457.7 1298.1,453.9 1301.2,451.3 1305.2,457.7 1312.1,455.6 1320.0,462.8 1324.4,462.2 1328.2,464.2 1333.2,468.6 1336.1,467.7 1339.9,470.7 1344.9,464.2 1349.3,465.7 1355.1,467.7 1363.9,465.1 1374.2,469.5 1383.0,469.2 1394.7,465.1 1402.0,466.6 1406.4,468.6 1413.7,468.0 1419.6,471.5 1434.2,477.4 1437.2,478.0 1446.0,478.9 1457.7,478.9 1475.2,476.8 1484.0,473.6 1489.9,473.9 1498.7,472.1 1503.1,475.9 1507.5,473.6 1511.9,475.1 1519.2,473.0 1526.5,475.4 1529.4,473.9 1538.2,473.6 1542.6,471.5 1554.3,472.4 1557.3,471.5 1567.5,476.8 1574.8,476.2 1585.1,478.3 1592.4,476.8 1599.7,476.5 1608.5,483.3 1617.3,489.7 1623.2,490.0 1627.0,492.1 1632.0,489.7 1637.8,489.7 1643.7,491.5 1653.9,489.7 1664.2,492.1 1673.0,489.1 1680.3,491.5 1687.6,490.6 1699.3,487.7 1703.7,490.0 1709.6,490.6 1718.4,489.1 1722.8,487.7 1731.5,487.7" fill="none" stroke="#5896ef" stroke-width="1" stroke-linejoin="round"/><rect x="17" y="497" width="8" height="4" fill="#7c262c"/><rect x="26" y="497" width="6" height="4" fill="#0d5447"/><rect x="33" y="497" width="11" height="4" fill="#7c262c"/><rect x="45" y="497" width="11" height="4" fill="#0d5447"/><rect x="57" y="497" width="10" height="4" fill="#7c262c"/><rect x="71" y="497" width="54" height="4" fill="#7c262c"/><rect x="126" y="497" width="38" height="4" fill="#0d5447"/><rect x="168" y="497" width="27" height="4" fill="#0d5447"/><rect x="196" y="497" width="22" height="4" fill="#7c262c"/><rect x="219" y="497" width="26" height="4" fill="#0d5447"/><rect x="246" y="497" width="15" height="4" fill="#7c262c"/><rect x="262" y="497" width="10" height="4" fill="#0d5447"/><rect x="276" y="497" width="12" height="4" fill="#0d5447"/><rect x="292" y="497" width="11" height="4" fill="#0d5447"/><rect x="304" y="497" width="30" height="4" fill="#7c262c"/><rect x="335" y="497" width="19" height="4" fill="#0d5447"/><rect x="357" y="497" width="16" height="4" fill="#0d5447"/><rect x="377" y="497" width="15" height="4" fill="#0d5447"/><rect x="393" y="497" width="19" height="4" fill="#7c262c"/><rect x="413" y="497" width="26" height="4" fill="#0d5447"/><rect x="443" y="497" width="19" height="4" fill="#0d5447"/><rect x="463" y="497" width="34" height="4" fill="#7c262c"/><rect x="498" y="497" width="49" height="4" fill="#0d5447"/><rect x="551" y="497" width="8" height="4" fill="#0d5447"/><rect x="560" y="497" width="41" height="4" fill="#7c262c"/><rect x="602" y="497" width="61" height="4" fill="#0d5447"/><rect x="664" y="497" width="7" height="4" fill="#7c262c"/><rect x="675" y="497" width="58" height="4" fill="#7c262c"/><rect x="734" y="497" width="57" height="4" fill="#0d5447"/><rect x="799" y="497" width="11" height="4" fill="#7c262c"/><rect x="811" y="497" width="11" height="4" fill="#0d5447"/><rect x="826" y="497" width="7" height="4" fill="#0d5447"/><rect x="837" y="497" width="16" height="4" fill="#0d5447"/><rect x="857" y="497" width="11" height="4" fill="#0d5447"/><rect x="869" y="497" width="30" height="4" fill="#7c262c"/><rect x="900" y="497" width="18" height="4" fill="#0d5447"/><rect x="919" y="497" width="19" height="4" fill="#7c262c"/><rect x="939" y="497" width="38" height="4" fill="#0d5447"/><rect x="978" y="497" width="6" height="4" fill="#7c262c"/><rect x="988" y="497" width="78" height="4" fill="#7c262c"/><rect x="1067" y="497" width="41" height="4" fill="#0d5447"/><rect x="1109" y="497" width="18" height="4" fill="#7c262c"/><rect x="1128" y="497" width="15" height="4" fill="#0d5447"/><rect x="1144" y="497" width="30" height="4" fill="#7c262c"/><rect x="1175" y="497" width="127" height="4" fill="#0d5447"/><rect x="1305" y="497" width="20" height="4" fill="#0d5447"/><rect x="1336" y="497" width="8" height="4" fill="#0d5447"/><rect x="1356" y="497" width="7" height="4" fill="#0d5447"/><rect x="1367" y="497" width="8" height="4" fill="#0d5447"/><rect x="1376" y="497" width="7" height="4" fill="#7c262c"/><rect x="1384" y="497" width="10" height="4" fill="#0d5447"/><rect x="1395" y="497" width="15" height="4" fill="#7c262c"/><rect x="1411" y="497" width="22" height="4" fill="#0d5447"/><rect x="1434" y="497" width="258" height="4" fill="#7c262c"/><rect x="1693" y="497" width="38" height="4" fill="#0d5447"/></svg>
<div class="r" style="left:12px;top:213px;width:42px;height:20px;background:#0f0f0f;"></div>
<div class="r" style="left:12px;top:238px;width:69px;height:20px;background:#0f0f0f;"></div>
<div class="r" style="left:12px;top:263px;width:145px;height:20px;background:#0f0f0f;"></div>
<div class="r" style="left:12px;top:288px;width:128px;height:20px;background:#0f0f0f;"></div>
<div class="t" style="left:15.5px;top:217.10px;font-size:13px;line-height:13px;color:#dbdbdb;">Equity</div>
<div class="t" style="left:15.5px;top:241.90px;font-size:13px;line-height:13px;color:#dbdbdb;">Buy &amp; hold</div>
<div class="t" style="left:15.5px;top:267.00px;font-size:13px;line-height:13px;color:#5c5c5c;">Trades excursions</div>
<svg class="r" style="left:134px;top:266px" width="18" height="16" viewBox="0 0 18 16"><defs><mask id="eyem"><rect width="18" height="16" fill="#fff"/><path d="M14.7 2.2 L3.3 13.6" stroke="#000" stroke-width="3"/></mask></defs><g mask="url(#eyem)"><ellipse cx="9" cy="8" rx="7.6" ry="5.6" stroke="#c8c8c8" stroke-width="1.1" fill="none"/><circle cx="9" cy="8" r="2.6" stroke="#c8c8c8" stroke-width="1.1" fill="none"/></g><path d="M14.7 2.2 L3.3 13.6" stroke="#c8c8c8" stroke-width="1.1"/></svg>
<div class="t" style="left:15.5px;top:292.20px;font-size:13px;line-height:13px;color:#dbdbdb;">Run-up / Drawdowns</div>
<svg class="r" style="left:15px;top:316px" width="30" height="21" viewBox="0 0 30 21"><rect x="0.5" y="0.5" width="29" height="20" rx="4" stroke="#3d3d3d" fill="#0f0f0f"/><path d="M10.5 12 l4.5 -4 l4.5 4" stroke="#dbdbdb" stroke-width="1.3" fill="none"/></svg>
<div class="t" style="left:1744.3px;top:215.39px;font-size:12px;line-height:12px;color:#c2c2c2;">350.00%</div>
<div class="t" style="left:1744.3px;top:248.67px;font-size:12px;line-height:12px;color:#c2c2c2;">300.00%</div>
<div class="t" style="left:1744.3px;top:281.95px;font-size:12px;line-height:12px;color:#c2c2c2;">250.00%</div>
<div class="t" style="left:1744.3px;top:315.23px;font-size:12px;line-height:12px;color:#c2c2c2;">200.00%</div>
<div class="t" style="left:1744.3px;top:348.51px;font-size:12px;line-height:12px;color:#c2c2c2;">150.00%</div>
<div class="t" style="left:1744.3px;top:381.78px;font-size:12px;line-height:12px;color:#c2c2c2;">100.00%</div>
<div class="t" style="left:1744.3px;top:415.06px;font-size:12px;line-height:12px;color:#c2c2c2;">50.00%</div>
<div class="t" style="left:1744.3px;top:448.34px;font-size:12px;line-height:12px;color:#c2c2c2;">0.00%</div>
<div class="r" style="left:1742px;top:274px;width:60px;height:17px;background:#089981;border-radius:2px;"></div>
<div class="t" style="left:1750px;top:276.24px;font-size:12px;line-height:12px;color:#ffffff;">257.29%</div>
<div class="r" style="left:1741.5px;top:479px;width:60.5px;height:18px;background:#5b9cf6;border-radius:2px;"></div>
<div class="t" style="left:1750px;top:481.24px;font-size:12px;line-height:12px;color:#ffffff;">−51.65%</div>
<div class="t" style="left:70.9px;top:510.84px;font-size:12px;line-height:12px;color:#c2c2c2;transform:translateX(-50%);">Feb</div>
<div class="t" style="left:183.2px;top:510.84px;font-size:12px;line-height:12px;color:#c2c2c2;transform:translateX(-50%);">May</div>
<div class="t" style="left:268.5px;top:510.84px;font-size:12px;line-height:12px;color:#c2c2c2;transform:translateX(-50%);">Jun</div>
<div class="t" style="left:353.5px;top:510.84px;font-size:12px;line-height:12px;color:#c2c2c2;transform:translateX(-50%);">Jul</div>
<div class="t" style="left:438.5px;top:510.84px;font-size:12px;line-height:12px;color:#c2c2c2;transform:translateX(-50%);">Aug</div>
<div class="t" style="left:523.5px;top:510.84px;font-size:12px;line-height:12px;color:#c2c2c2;transform:translateX(-50%);">8</div>
<div class="t" style="left:608.8px;top:510.84px;font-size:12px;line-height:12px;color:#c2c2c2;transform:translateX(-50%);">Oct</div>
<div class="t" style="left:748px;top:510.84px;font-size:12px;line-height:12px;color:#c2c2c2;font-weight:700;transform:translateX(-50%);">2025</div>
<div class="t" style="left:879.8px;top:510.84px;font-size:12px;line-height:12px;color:#c2c2c2;transform:translateX(-50%);">May</div>
<div class="t" style="left:965px;top:510.84px;font-size:12px;line-height:12px;color:#c2c2c2;transform:translateX(-50%);">11</div>
<div class="t" style="left:1045.5px;top:510.84px;font-size:12px;line-height:12px;color:#c2c2c2;transform:translateX(-50%);">Jul</div>
<div class="t" style="left:1127px;top:510.84px;font-size:12px;line-height:12px;color:#c2c2c2;transform:translateX(-50%);">6</div>
<div class="t" style="left:1227.5px;top:510.84px;font-size:12px;line-height:12px;color:#c2c2c2;transform:translateX(-50%);">Sep</div>
<div class="t" style="left:1324.5px;top:510.84px;font-size:12px;line-height:12px;color:#c2c2c2;transform:translateX(-50%);">Nov</div>
<div class="t" style="left:1479px;top:510.84px;font-size:12px;line-height:12px;color:#c2c2c2;font-weight:700;transform:translateX(-50%);">2026</div>
<div class="t" style="left:1614.5px;top:510.84px;font-size:12px;line-height:12px;color:#c2c2c2;transform:translateX(-50%);">Feb</div>
<div class="t" style="left:1695.5px;top:510.84px;font-size:12px;line-height:12px;color:#c2c2c2;transform:translateX(-50%);">4</div>
<div class="r" style="left:16px;top:555px;width:1783px;height:600px;background:transparent;border:1px solid #424242;border-radius:10px;box-sizing:border-box;"></div>
<svg class="r" style="left:35px;top:576px" width="14" height="12" viewBox="0 0 14 12"><path d="M2 3.5 l5 4.5 l5 -4.5" stroke="#dbdbdb" stroke-width="1.6" fill="none"/></svg>
<div class="t" style="left:59.6px;top:572.76px;font-size:18px;line-height:18px;color:#e6e6e6;font-weight:700;">Performance</div>
<div class="t" style="left:33.2px;top:622.15px;font-size:14px;line-height:14px;color:#e6e6e6;font-weight:700;">Profit structure</div>
<div class="t" style="left:923.5px;top:622.15px;font-size:14px;line-height:14px;color:#e6e6e6;font-weight:700;">Benchmarking</div>
<svg class="r" style="left:0;top:0" width="1815" height="1041"><rect x="33" y="657" width="803" height="1" fill="#2a2a2a"/><rect x="33" y="699" width="803" height="1" fill="#2a2a2a"/><rect x="33" y="741" width="803" height="1" fill="#2a2a2a"/><rect x="33" y="782" width="803" height="1" fill="#2a2a2a"/><rect x="33" y="823" width="803" height="1" fill="#8a8a8a"/><rect x="103" y="665" width="60" height="159" fill="#089981"/><rect x="304" y="665" width="60" height="110" fill="#f23645"/><rect x="505" y="774" width="60" height="23" fill="#ff9800"/><rect x="705" y="796" width="60" height="28" fill="#3179f5"/><path d="M163 665.5 H304 M364 774.5 H505 M565 796.5 H705" stroke="#8a8a8a" stroke-width="1" stroke-dasharray="3 2" fill="none"/><rect x="924" y="658" width="786" height="1" fill="#2a2a2a"/><rect x="924" y="728" width="786" height="1" fill="#2a2a2a"/><rect x="924" y="821" width="786" height="1" fill="#2a2a2a"/><path d="M993 763 H1249 V775 H990 V766 Q990 763 993 763 Z" fill="#8a5408"/><path d="M990 775 H1249 V789 H993 Q990 789 990 786 Z" fill="#ff9800"/><path d="M1249 763 L1317 775 L1249 789 Z" fill="#2e1f0b"/><path d="M1249 763 L1317 775 L1249 789" stroke="#ff9800" stroke-width="1" stroke-dasharray="3 2" fill="none"/><path d="M1317 775 L1383 693 L1383 778 Z" fill="#16284a"/><path d="M1317 775 L1383 693 M1317 775 L1383 714 M1317 775 L1383 778" stroke="#3179f5" stroke-width="1" stroke-dasharray="3 2" fill="none"/><path d="M1383 692 H1638 Q1641.5 692 1641.5 695 V714 H1383 Z" fill="#1f4283"/><rect x="1383" y="714" width="258.5" height="61" fill="#3179f5"/><path d="M1383 775 H1641.5 V776 Q1641.5 778 1638 778 H1383 Z" fill="#1f4283"/><rect x="924" y="775" width="786" height="1" fill="#8a8a8a"/><circle cx="1317" cy="775.5" r="3" fill="#9a9a9a"/></svg>
<div class="r" style="left:1129px;top:754px;width:55px;height:18px;background:#e27e1a;border-radius:2px 0 0 2px;"></div>
<div class="r" style="left:1185px;top:754px;width:64px;height:18px;background:#e27e1a;border-radius:0 2px 2px 0;"></div>
<div class="t" style="left:1135px;top:754.80px;font-size:13px;line-height:13px;color:#ffffff;">Max</div>
<div class="t" style="left:1243px;top:754.80px;font-size:13px;line-height:13px;color:#ffffff;transform:translateX(-100%);">50.18%</div>
<div class="r" style="left:1129px;top:779px;width:55px;height:18px;background:#c96d13;border-radius:2px 0 0 2px;"></div>
<div class="r" style="left:1185px;top:779px;width:64px;height:18px;background:#c96d13;border-radius:0 2px 2px 0;"></div>
<div class="t" style="left:1135px;top:779.80px;font-size:13px;line-height:13px;color:#ffffff;">Current</div>
<div class="t" style="left:1243px;top:779.80px;font-size:13px;line-height:13px;color:#ffffff;transform:translateX(-100%);">−51.65%</div>
<div class="r" style="left:1129px;top:797px;width:55px;height:18px;background:#e27e1a;border-radius:2px 0 0 2px;"></div>
<div class="r" style="left:1185px;top:797px;width:64px;height:18px;background:#e27e1a;border-radius:0 2px 2px 0;"></div>
<div class="t" style="left:1135px;top:797.80px;font-size:13px;line-height:13px;color:#ffffff;">Min</div>
<div class="t" style="left:1243px;top:797.80px;font-size:13px;line-height:13px;color:#ffffff;transform:translateX(-100%);">−57.89%</div>
<div class="r" style="left:1383px;top:683px;width:55px;height:18px;background:#3179f5;border-radius:2px 0 0 2px;"></div>
<div class="r" style="left:1439px;top:683px;width:63px;height:18px;background:#3179f5;border-radius:0 2px 2px 0;"></div>
<div class="t" style="left:1389px;top:683.80px;font-size:13px;line-height:13px;color:#ffffff;">Max</div>
<div class="t" style="left:1496px;top:683.80px;font-size:13px;line-height:13px;color:#ffffff;transform:translateX(-100%);">349.68%</div>
<div class="r" style="left:1383px;top:705px;width:55px;height:18px;background:#1f5ee6;border-radius:2px 0 0 2px;"></div>
<div class="r" style="left:1439px;top:705px;width:63px;height:18px;background:#1f5ee6;border-radius:0 2px 2px 0;"></div>
<div class="t" style="left:1389px;top:705.80px;font-size:13px;line-height:13px;color:#ffffff;">Current</div>
<div class="t" style="left:1496px;top:705.80px;font-size:13px;line-height:13px;color:#ffffff;transform:translateX(-100%);">257.29%</div>
<div class="r" style="left:1383px;top:769px;width:55px;height:18px;background:#3179f5;border-radius:2px 0 0 2px;"></div>
<div class="r" style="left:1439px;top:769px;width:63px;height:18px;background:#3179f5;border-radius:0 2px 2px 0;"></div>
<div class="t" style="left:1389px;top:769.80px;font-size:13px;line-height:13px;color:#ffffff;">Min</div>
<div class="t" style="left:1496px;top:769.80px;font-size:13px;line-height:13px;color:#ffffff;transform:translateX(-100%);">−9.49%</div>
<div class="t" style="left:891px;top:652.49px;font-size:11px;line-height:11px;color:#c2c2c2;transform:translateX(-100%);">16.00 K</div>
<div class="t" style="left:891px;top:693.69px;font-size:11px;line-height:11px;color:#c2c2c2;transform:translateX(-100%);">12.00 K</div>
<div class="t" style="left:891px;top:733.89px;font-size:11px;line-height:11px;color:#c2c2c2;transform:translateX(-100%);">8.00 K</div>
<div class="t" style="left:891px;top:774.89px;font-size:11px;line-height:11px;color:#c2c2c2;transform:translateX(-100%);">4.00 K</div>
<div class="t" style="left:891px;top:814.49px;font-size:11px;line-height:11px;color:#c2c2c2;transform:translateX(-100%);">0.00</div>
<div class="t" style="left:1719.7px;top:652.99px;font-size:11px;line-height:11px;color:#c2c2c2;">490.00%</div>
<div class="t" style="left:1719.7px;top:722.69px;font-size:11px;line-height:11px;color:#c2c2c2;">200.00%</div>
<div class="t" style="left:1719.7px;top:769.29px;font-size:11px;line-height:11px;color:#c2c2c2;">0.00%</div>
<div class="t" style="left:1719.7px;top:815.99px;font-size:11px;line-height:11px;color:#c2c2c2;">−190.00%</div>
<div class="r" style="left:285.3px;top:844.4px;width:8px;height:8px;border-radius:4px;background:#089981"></div>
<div class="t" style="left:301.3px;top:842.00px;font-size:13px;line-height:13px;color:#a3a3a3;">Total profit</div>
<div class="r" style="left:378px;top:844.4px;width:8px;height:8px;border-radius:4px;background:#f23645"></div>
<div class="t" style="left:393.6px;top:842.00px;font-size:13px;line-height:13px;color:#a3a3a3;">Total loss</div>
<div class="r" style="left:463.8px;top:844.4px;width:8px;height:8px;border-radius:4px;background:#ff9800"></div>
<div class="t" style="left:479.8px;top:842.00px;font-size:13px;line-height:13px;color:#a3a3a3;">Commission</div>
<div class="r" style="left:566.6px;top:844.4px;width:8px;height:8px;border-radius:4px;background:#3179f5"></div>
<div class="t" style="left:583px;top:842.00px;font-size:13px;line-height:13px;color:#a3a3a3;">Total P&amp;L</div>
<div class="r" style="left:1227.9px;top:844.4px;width:8px;height:8px;border-radius:4px;background:#ff9800"></div>
<div class="t" style="left:1244.4px;top:842.00px;font-size:13px;line-height:13px;color:#a3a3a3;">P&amp;L for buy &amp; hold</div>
<div class="r" style="left:1367.8px;top:844.4px;width:8px;height:8px;border-radius:4px;background:#3179f5"></div>
<div class="t" style="left:1384.3px;top:842.00px;font-size:13px;line-height:13px;color:#a3a3a3;">P&amp;L for strategy</div>
<div class="r" style="left:17px;top:874px;width:1781px;height:40px;background:#1e1e1e;"></div>
<div class="t" style="left:33px;top:886.75px;font-size:14px;line-height:14px;color:#e6e6e6;font-weight:700;">Returns</div>
<div class="t" style="left:33px;top:926.85px;font-size:14px;line-height:14px;color:#8c8c8c;">Metric</div>
<div class="t" style="left:717.5px;top:926.85px;font-size:14px;line-height:14px;color:#8c8c8c;transform:translateX(-100%);">All</div>
<div class="t" style="left:1058px;top:926.85px;font-size:14px;line-height:14px;color:#8c8c8c;transform:translateX(-50%);">Long</div>
<div class="t" style="left:1413px;top:926.85px;font-size:14px;line-height:14px;color:#8c8c8c;transform:translateX(-50%);">Short</div>
<div class="r" style="left:17px;top:955px;width:1781px;height:1px;background:#3a3a3a;"></div>
<div class="t" style="left:33px;top:977.15px;font-size:14px;line-height:14px;color:#dbdbdb;">Initial capital</div>
<div class="t" style="left:717.5px;top:975.15px;font-size:14px;line-height:14px;color:#dbdbdb;transform:translateX(-100%)">1,000.00<span style="font-size:10px;margin-left:3px">USD</span></div>
<div class="r" style="left:17px;top:1012px;width:1781px;height:1px;background:#2a2a2a;"></div>
<div class="t" style="left:33px;top:1034.15px;font-size:14px;line-height:14px;color:#dbdbdb;">Open P&amp;L</div>
<div class="t" style="left:717.5px;top:1022.65px;font-size:14px;line-height:14px;color:#dbdbdb;transform:translateX(-100%)">0<span style="font-size:10px;margin-left:3px">USD</span></div>

</body></html>
